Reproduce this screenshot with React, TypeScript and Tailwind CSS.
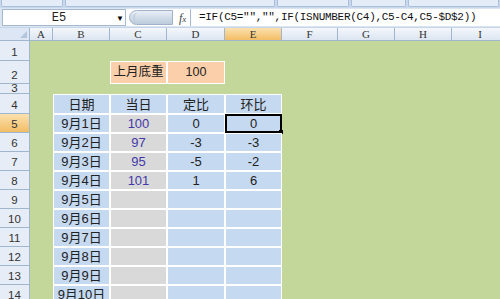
import React from 'react'

const colWidths = [23, 57, 57, 58, 57, 56, 57, 57, 57, 60]
const colLetters = ['A', 'B', 'C', 'D', 'E', 'F', 'G', 'H', 'I', 'J']
const rowHeights = [20, 23, 10, 20, 19, 19, 19, 19, 19, 19, 19, 19, 19, 19]

const tableRows = [
  ['日期', '当日', '定比', '环比'],
  ['9月1日', '100', '0', '0'],
  ['9月2日', '97', '-3', '-3'],
  ['9月3日', '95', '-5', '-2'],
  ['9月4日', '101', '1', '6'],
  ['9月5日', '', '', ''],
  ['9月6日', '', '', ''],
  ['9月7日', '', '', ''],
  ['9月8日', '', '', ''],
  ['9月9日', '', '', ''],
  ['9月10日', '', '', ''],
]

const font = "font-['Liberation_Sans','Noto_Sans_CJK_SC',sans-serif]"

function Cell({ row, col }: { row: number; col: number }) {
  const w = colWidths[col]
  // row 2: 上月底重 block
  if (row === 2 && (col === 2 || col === 3)) {
    return (
      <div
        style={{ width: w }}
        className={`shrink-0 h-full border border-white bg-[#fbcfa9] flex items-center justify-center text-[12.5px] text-[#222] whitespace-nowrap ${font}`}
      >
        {col === 2 ? '上月底重' : '100'}
      </div>
    )
  }
  if (row >= 4 && col >= 1 && col <= 4) {
    const r = row - 4
    const value = tableRows[r][col - 1]
    const isHeader = r === 0
    const bg = !isHeader && col === 2 ? 'bg-[#d9d9d9]' : 'bg-[#c5d9f1]'
    const color = !isHeader && col === 2 ? 'text-[#4338a8]' : 'text-[#222]'
    const selected = row === 5 && col === 4
    return (
      <div
        style={{ width: w }}
        className={`relative shrink-0 h-full border border-white ${bg} ${color} flex items-center justify-center text-[13px] leading-[17px] whitespace-nowrap ${font}`}
      >
        {value}
        {selected && (
          <>
            <div className="absolute -inset-px border-2 border-black" />
            <div className="absolute -right-[2px] -bottom-[2px] w-[4px] h-[4px] bg-black" />
          </>
        )}
      </div>
    )
  }
  return <div style={{ width: w }} className="shrink-0 h-full" />
}

export default function App() {
  return (
    <div className="w-[500px] h-[299px] overflow-hidden bg-[#c4d79b] flex flex-col">
      {/* ribbon edge */}
      <div className="h-[8px] shrink-0 bg-[#c9d8ec] flex gap-[2px] px-[1px]">
        <div className="w-[62px] h-[7px] bg-[#e4ecf7] border border-t-0 border-[#aabfd9] rounded-b-[2px]" />
        <div className="w-[210px] h-[7px] bg-[#e4ecf7] border border-t-0 border-[#aabfd9] rounded-b-[2px]" />
        <div className="w-[72px] h-[7px] bg-[#e4ecf7] border border-t-0 border-[#aabfd9] rounded-b-[2px]" />
        <div className="w-[55px] h-[7px] bg-[#e4ecf7] border border-t-0 border-[#aabfd9] rounded-b-[2px]" />
        <div className="flex-1 h-[7px] bg-[#e4ecf7] border border-t-0 border-[#aabfd9] rounded-b-[2px]" />
      </div>

      {/* formula bar */}
      <div className="h-[19px] shrink-0 bg-[#dbe5f1] flex items-stretch pt-[1px] pb-[1px]">
        <div className="w-[124px] ml-[2px] bg-white border border-[#a5b8d1] flex items-center relative">
          <span className="flex-1 text-center pr-[10px] text-[12px] text-[#222] font-['Liberation_Mono',monospace]">E5</span>
          <span className="absolute right-[1px] text-[8px] text-black leading-none">▼</span>
        </div>
        <div className="w-[64px] bg-white flex items-center relative">
          <div className="ml-[3px] w-[44px] h-[15px] rounded-l-full bg-gradient-to-b from-[#e8eef6] to-[#bccbdc] border border-[#9fb2c8] flex items-center">
            <div className="ml-[3px] w-[9px] h-[9px] rounded-full border-l-2 border-[#c2cfdd]" />
          </div>
          <span className="ml-[6px] text-[12px] italic text-[#444] font-['Liberation_Serif',serif]">f<span className="text-[9px]">x</span></span>
        </div>
        <div className="flex-1 bg-white border-l border-[#a5b8d1] flex items-center pl-[8px] text-[11px] tracking-[-0.3px] text-[#111] font-['Liberation_Mono',monospace] whitespace-nowrap">
          =IF(C5="","",IF(ISNUMBER(C4),C5-C4,C5-$D$2))
        </div>
      </div>

      <div className="h-[1px] shrink-0 bg-[#c6d5e8]" />

      {/* column headers */}
      <div className="h-[13px] shrink-0 flex border-b border-[#9eb6ce]">
        <div className="w-[30px] shrink-0 bg-[#dce6f4] border-r border-[#9eb6ce] relative">
          <div className="absolute right-[2px] bottom-[2px] w-0 h-0 border-l-[7px] border-l-transparent border-b-[7px] border-b-[#b4c6dc]" />
        </div>
        {colLetters.map((l, i) => (
          <div
            key={l}
            style={{ width: colWidths[i] }}
            className={`shrink-0 border-r border-[#9eb6ce] flex items-center justify-center text-[11px] text-[#333] font-['Liberation_Serif',serif] ${
              l === 'E' ? 'bg-gradient-to-b from-[#fbe1ad] to-[#f2bd63]' : 'bg-gradient-to-b from-[#f4f7fb] to-[#dce5f1]'
            }`}
          >
            {l}
          </div>
        ))}
      </div>

      {/* rows */}
      {rowHeights.map((h, ri) => {
        const row = ri + 1
        return (
          <div key={row} style={{ height: h }} className="shrink-0 flex">
            <div
              className={`w-[30px] shrink-0 border-r border-b border-[#9eb6ce] flex items-end justify-center text-[11.5px] text-[#333] font-['Liberation_Sans',sans-serif] ${
                row === 3 ? 'leading-[9px]' : 'leading-[15px]'
              } ${row === 5 ? 'bg-gradient-to-b from-[#fbe1ad] to-[#f2bd63]' : 'bg-[#e6edf7]'}`}
            >
              {row}
            </div>
            {colWidths.map((_, ci) => (
              <Cell key={ci} row={row} col={ci} />
            ))}
          </div>
        )
      })}
    </div>
  )
}
